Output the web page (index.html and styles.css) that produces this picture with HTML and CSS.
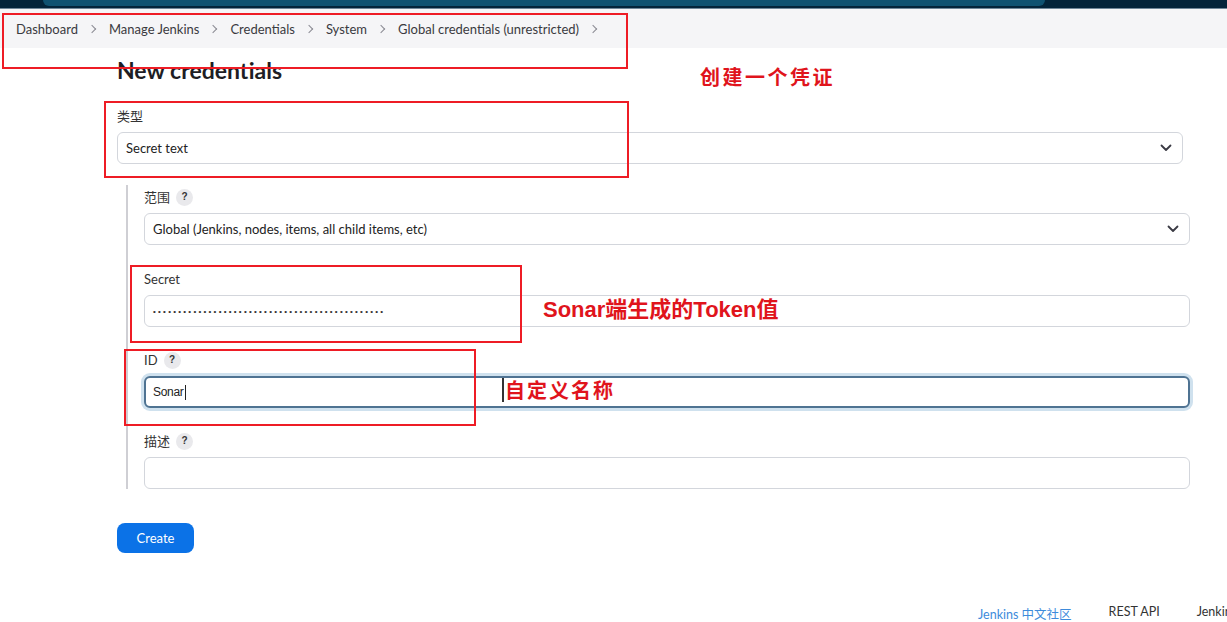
FILE: index.html
```html
<!DOCTYPE html>
<html lang="zh">
<head>
<meta charset="utf-8">
<title>New credentials</title>
<link rel="stylesheet" href="styles.css">
</head>
<body>
<div class="page">
  <header class="topbar"><div class="search-shape"></div></header>
  <nav class="breadcrumbs">
    <a class="crumb">Dashboard</a><span class="chev"></span>
    <a class="crumb">Manage Jenkins</a><span class="chev"></span>
    <a class="crumb">Credentials</a><span class="chev"></span>
    <a class="crumb">System</a><span class="chev"></span>
    <a class="crumb">Global credentials (unrestricted)</a><span class="chev"></span>
  </nav>

  <main class="main">
    <h1 class="title">New credentials</h1>

    <div class="field">
      <label class="label">类型</label>
      <div class="control select">Secret text<span class="caret"><svg width="12" height="8" viewBox="0 0 12 8"><path d="M1.5 1.5 L6 6 L10.5 1.5" fill="none" stroke="#3a3a44" stroke-width="1.8" stroke-linecap="round" stroke-linejoin="round"/></svg></span></div>
    </div>

    <section class="nested">
      <div class="field">
        <label class="label">范围 <span class="help">?</span></label>
        <div class="control select">Global (Jenkins, nodes, items, all child items, etc)<span class="caret"><svg width="12" height="8" viewBox="0 0 12 8"><path d="M1.5 1.5 L6 6 L10.5 1.5" fill="none" stroke="#3a3a44" stroke-width="1.8" stroke-linecap="round" stroke-linejoin="round"/></svg></span></div>
      </div>
      <div class="field secret">
        <label class="label">Secret</label>
        <div class="control"><span class="dots">••••••••••••••••••••••••••••••••••••••••••••••</span></div>
      </div>
      <div class="field">
        <label class="label">ID <span class="help">?</span></label>
        <div class="control focused"><span class="sonar">Sonar</span><span class="caretline"></span></div>
      </div>
      <div class="field last">
        <label class="label">描述 <span class="help">?</span></label>
        <div class="control"></div>
      </div>
    </section>

    <button class="create">Create</button>
  </main>

  <footer class="footer">
    <a class="flink blue">Jenkins 中文社区</a>
    <a class="flink">REST API</a>
    <a class="flink">Jenkins 2.401</a>
  </footer>

  <div class="mark m1"></div>
  <div class="mark m2"></div>
  <div class="mark m3"></div>
  <div class="mark m4"></div>
  <div class="note n1">创建一个凭证</div>
  <div class="note n2">Sonar端生成的Token值</div>
  <div class="note n3"><span class="tcursor"></span>自定义名称</div>
</div>
</body>
</html>
```

FILE: styles.css
```css
* { box-sizing: border-box; }
html, body { margin: 0; padding: 0; }
body {
  width: 1227px;
  height: 622px;
  overflow: hidden;
  background: #fff;
  font-family: "Segoe UI", "Lato", "Noto Sans CJK SC", sans-serif;
  color: #333;
  font-size: 13px;
}
.page { position: relative; width: 1227px; height: 622px; overflow: hidden; }

.topbar {
  height: 9px;
  background: #03243a;
  border-bottom: 1px solid #6f8799;
  position: relative;
}
.search-shape {
  margin-left: 43px;
  width: 1002px;
  height: 6px;
  background: #0f5271;
  border-radius: 0 0 8px 8px;
}

.breadcrumbs {
  height: 39px;
  background: #f5f5f7;
  display: flex;
  align-items: center;
  padding-left: 16px;
  font-size: 13px;
  color: #3a3a40;
}
.crumb { white-space: nowrap; }
.chev {
  width: 6px; height: 6px;
  border-top: 1.3px solid #8a8a92;
  border-right: 1.3px solid #8a8a92;
  transform: rotate(45deg);
  margin: 0 14px 0 11px;
}

.main {
  padding: 10px 44px 0 117px;
}
.title {
  margin: 0;
  font-size: 23px;
  line-height: 24px;
  font-weight: 700;
  color: #1e1e24;
}

.field { margin-top: 25px; }
.label {
  display: flex;
  align-items: center;
  gap: 6px;
  height: 18px;
  line-height: 18px;
  font-size: 13px;
  color: #333;
}
.help {
  display: inline-flex;
  align-items: center;
  justify-content: center;
  width: 17px; height: 17px;
  border-radius: 50%;
  background: #e9e9ec;
  font-size: 10px;
  font-weight: 700;
  color: #333;
  font-family: "Liberation Sans", sans-serif;
}
.control {
  margin-top: 7px;
  height: 32px;
  border: 1px solid #d3d6dc;
  border-radius: 6px;
  display: flex;
  align-items: center;
  padding: 0 8px;
  font-size: 13px;
  color: #222;
  background: #fff;
  position: relative;
}
.select { justify-content: space-between; }
.caret { display: flex; align-items: center; margin-right: 2px; }

.nested {
  margin: 21px -7px 0 9px;
  border-left: 2px solid #cfcfd4;
  padding-left: 16px;
}
.nested .field:first-child { margin-top: 0; padding-top: 3px; }
.nested .field { margin-top: 24px; }
.nested .field.secret { margin-top: 25px; }

.dots {
  font-family: "Liberation Sans", sans-serif;
  font-size: 8px;
  letter-spacing: 2.25px;
  color: #333;
}
.focused {
  border: 2px solid #4f7392;
  box-shadow: 0 0 0 3px #cfe1ee;
  padding-left: 7px;
}
.sonar {
  font-family: "Liberation Sans Narrow", "Liberation Sans", sans-serif;
  font-size: 12px;
  letter-spacing: -0.3px;
}
.caretline {
  width: 1px; height: 15px; background: #222; margin-left: 1px;
}

.create {
  margin-top: 34px;
  width: 77px;
  height: 30px;
  border: none;
  border-radius: 8px;
  background: #0b72e7;
  color: #fff;
  font-family: inherit;
  font-size: 13px;
  padding: 0;
}

.footer {
  position: absolute;
  left: 0; right: 0; top: 604px;
  display: flex;
  justify-content: flex-start;
  padding-left: 978px;
  gap: 37px;
  font-size: 12.5px;
  white-space: nowrap;
  color: #333;
}
.flink.blue { color: #3d8bdb; }

.mark {
  position: absolute;
  border: 2px solid #ee1c25;
}
.m1 { left: 2px; top: 13px; width: 626px; height: 56px; }
.m2 { left: 104px; top: 101px; width: 525px; height: 77px; }
.m3 { left: 130px; top: 265px; width: 392px; height: 78px; }
.m4 { left: 124px; top: 349px; width: 352px; height: 77px; }

.note {
  position: absolute;
  color: #e0141c;
  font-weight: 700;
  font-family: "Noto Sans CJK SC", "Liberation Sans", sans-serif;
  white-space: nowrap;
}
.n1 { left: 700px; top: 63px; font-size: 20px; line-height: 28px; letter-spacing: 2.5px; }
.n2 { left: 543px; top: 296px; font-size: 22px; line-height: 28px; font-family: "Liberation Sans", "Noto Sans CJK SC", sans-serif; }
.n3 { left: 502px; top: 376px; font-size: 20px; line-height: 28px; letter-spacing: 2px; display: flex; align-items: center; }
.tcursor { width: 2px; height: 24px; background: #333; margin-right: 1px; }
```
